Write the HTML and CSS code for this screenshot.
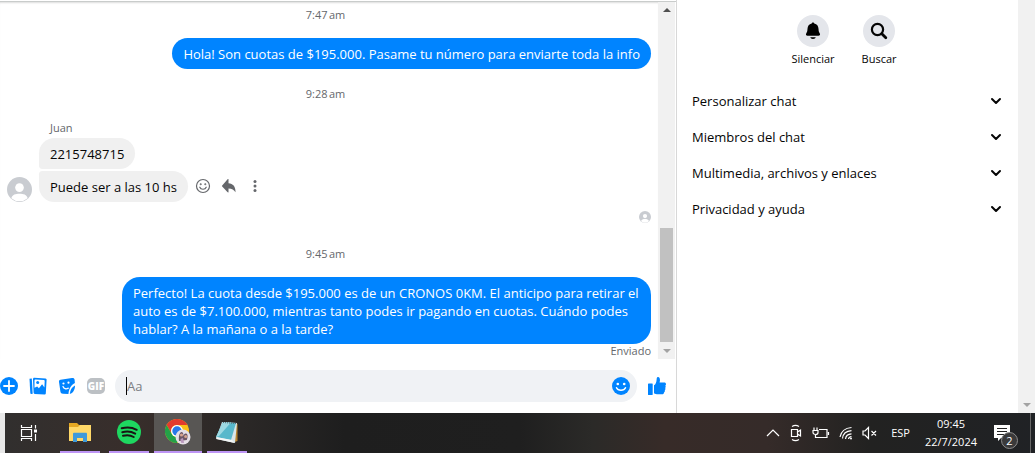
FILE: index.html
```html
<!DOCTYPE html>
<html lang="es">
<head>
  <meta charset="UTF-8">
  <meta name="viewport" content="width=device-width, initial-scale=1.0">
  <title>Messenger</title>
  <link rel="stylesheet" href="styles.css">
</head>
<body>
  <svg class="defs" aria-hidden="true">
    <symbol id="person" viewBox="0 0 26 26">
      <circle cx="13" cy="13" r="13" fill="#c9ccd1"/>
      <circle cx="13" cy="11" r="4.5" fill="#fff"/>
      <path d="M4.5 22c1-3.6 4.5-4.500 8.500-4.500s7.500.9 8.500 4.500a13 13 0 0 1-17 0z" fill="#fff"/>
    </symbol>
    <symbol id="chevron" viewBox="0 0 12 12">
      <path d="M2 4l4 4 4-4" fill="none" stroke="#050505" stroke-width="2" stroke-linecap="round" stroke-linejoin="round"/>
    </symbol>
  </svg>

  <main class="app">
    <section class="chat">
      <div class="history">
        <div class="messages">
          <time class="time">7:47&#8239;am</time>
          <div class="bubble sent">Hola! Son cuotas de $195.000. Pasame tu número para enviarte toda la info</div>
          <time class="time">9:28&#8239;am</time>
          <div class="sender">Juan</div>
          <div class="row">
            <svg class="avatar"><use href="#person"/></svg>
            <div class="group">
              <div class="bubble received">2215748715</div>
              <div class="bubble received last">Puede ser a las 10 hs</div>
            </div>
            <div class="actions">
              <button type="button" aria-label="Reaccionar">
                <svg width="16" height="16" viewBox="0 0 16 16" fill="none" stroke="#65676b" stroke-width="1.2"><circle cx="8" cy="8" r="6.5"/><path d="M4.8 9.2c1 2.700 5.400 2.700 6.400 0" stroke-linecap="round"/><circle cx="5.700" cy="6.200" r=".4"/><circle cx="10.300" cy="6.200" r=".4"/></svg>
              </button>
              <button type="button" aria-label="Responder">
                <svg width="16" height="16" viewBox="0 0 16 16" fill="#65676b"><path d="M7.500 1.500v3.700c4.500.2 7 3.300 7 8.300v.8c-1.500-2.300-3.500-3.600-7-3.700v3.300c0 .6-.5.700-.9.400L1.200 8.600c-.4-.4-.4-.7 0-1.100l5.400-6.200c.4-.4.900-.3.900.2z"/></svg>
              </button>
              <button type="button" aria-label="Más">
                <svg width="16" height="16" viewBox="0 0 16 16" fill="#65676b"><circle cx="8" cy="3.500" r="1.500"/><circle cx="8" cy="8" r="1.500"/><circle cx="8" cy="12.500" r="1.500"/></svg>
              </button>
            </div>
          </div>
          <svg class="seen"><use href="#person"/></svg>
          <time class="time">9:45&#8239;am</time>
          <div class="bubble sent">Perfecto! La cuota desde $195.000 es de un CRONOS 0KM. El anticipo para retirar el auto es de $7.100.000, mientras tanto podes ir pagando en cuotas. Cuándo podes hablar? A la mañana o a la tarde?</div>
          <div class="status">Enviado</div>
        </div>
        <div class="scrollbar" aria-hidden="true">
          <span class="arrow up"></span>
          <span class="thumb"></span>
          <span class="arrow down"></span>
        </div>
      </div>

      <form class="composer">
        <div class="tools">
          <button type="button" aria-label="Más opciones">
            <svg width="18" height="18" viewBox="0 0 18 18"><circle cx="9" cy="9" r="9" fill="#0084ff"/><path d="M9 4v10M4 9h10" stroke="#fff" stroke-width="1.8" stroke-linecap="round"/></svg>
          </button>
          <button type="button" aria-label="Adjuntar foto">
            <svg width="18" height="18" viewBox="0 0 18 18"><path d="M.5 1.800l2.300-.4.900 15.400-1.400.2c-.6 0-.9-.3-1-.8z" fill="#0084ff"/><path d="M5.300.8l11.200.7c.8.100 1.200.5 1.100 1.300l-.8 13.600c-.1.800-.5 1.200-1.300 1.100l-9.700-.6c-.7 0-1.100-.4-1.200-1.100L4 2.200C4 1.400 4.500.8 5.300.8z" fill="#0084ff"/><path d="M5.500 10.800V3.500c0-.6.300-.9.900-.9l8.400.5c.6 0 .9.400.9.900l-.3 6.500-2.300-3.300-3.200 4-1.700-1.700z" fill="#fff"/><circle cx="8.700" cy="5.600" r="1.500" fill="#0084ff"/></svg>
          </button>
          <button type="button" aria-label="Elegir un sticker">
            <svg width="18" height="18" viewBox="0 0 18 18"><path d="M2.500 2.800L14 1c1.500-.2 2.400.4 2.600 1.800l.3 3.200c-3.200 1.500-5.700 4.500-6.500 11L5 16.800c-1.500-.1-2.300-.9-2.600-2.300L1 5c-.2-1.200.3-2 1.500-2.200z" fill="#0084ff"/><path d="M17 8.500c0 4.300-2 7.600-5.200 8.500.4-4 2-7 5.200-8.500z" fill="#0084ff"/><path d="M5 9.500c1 2.300 3 2.900 5.300 1.700" fill="none" stroke="#fff" stroke-width="1.3" stroke-linecap="round"/><circle cx="5.500" cy="6.500" r="1.100" fill="#fff"/><circle cx="10.500" cy="5.700" r="1.100" fill="#fff"/></svg>
          </button>
          <button type="button" class="gif" aria-label="Elegir un GIF">GIF</button>
        </div>
        <div class="field">
          <input type="text" placeholder="Aa" aria-label="Mensaje">
          <button type="button" aria-label="Elegir un emoji">
            <svg width="18" height="18" viewBox="0 0 18 18"><circle cx="9" cy="9" r="9" fill="#0084ff"/><circle cx="5.800" cy="7" r="1.300" fill="#fff"/><circle cx="12.200" cy="7" r="1.300" fill="#fff"/><path d="M4.500 10.700c1.500 3.400 7.500 3.400 9 0" fill="none" stroke="#fff" stroke-width="1.5" stroke-linecap="round"/></svg>
          </button>
        </div>
        <button type="button" aria-label="Enviar me gusta">
          <svg width="18" height="18" viewBox="0 0 18 18" fill="#0084ff"><path d="M.7 6.500h3.500c.3 0 .5.200.5.500v10.500c0 .3-.2.500-.5.500H.7c-.4 0-.7-.2-.7-.6V7.100c0-.4.300-.6.700-.6z"/><path d="M6 8.300c1.700-1 2.500-3 2.700-6.600C8.700.5 9.300 0 10.200 0c1.600.3 2.300 2.500 1.400 5.600h4.700c1 0 1.700.7 1.700 1.600 0 .7-.3 1.100-.7 1.400.5.800.6 1.700-.1 2.400.4.800.3 1.700-.4 2.200.3 1-.1 1.800-.8 2.200 0 1.200-.7 1.800-1.900 1.800H10c-1.700 0-2.800-.3-4-1z"/></svg>
        </button>
      </form>
    </section>

    <aside class="details">
      <div class="panel">
        <div class="shortcuts">
          <button type="button" class="shortcut">
            <span class="circle"><svg width="16" height="18" viewBox="0 0 16 18"><path d="M8 .5c.7 0 1.200.5 1.300 1.100 2.700.6 4.100 2.600 4.200 5.200.1 2.600.6 3.500 1.300 4.800.7 1.300 0 2.200-1.300 2.200h-11c-1.300 0-2-.9-1.300-2.200.7-1.300 1.200-2.200 1.300-4.800.1-2.600 1.500-4.600 4.200-5.200C6.800 1 7.300.5 8 .5zM5.300 15.200h5.400c-.3 1-1.200 1.700-2.700 1.700s-2.400-.7-2.700-1.700z"/></svg></span>
            Silenciar
          </button>
          <button type="button" class="shortcut">
            <span class="circle"><svg width="18" height="18" viewBox="0 0 18 18" fill="none" stroke="#050505"><circle cx="7.500" cy="7.500" r="5.600" stroke-width="2.200"/><path d="M11.800 11.800l4 4" stroke-width="2.800" stroke-linecap="round"/></svg></span>
            Buscar
          </button>
        </div>
        <button type="button" class="section">Personalizar chat <svg width="12" height="12"><use href="#chevron"/></svg></button>
        <button type="button" class="section">Miembros del chat <svg width="12" height="12"><use href="#chevron"/></svg></button>
        <button type="button" class="section">Multimedia, archivos y enlaces <svg width="12" height="12"><use href="#chevron"/></svg></button>
        <button type="button" class="section">Privacidad y ayuda <svg width="12" height="12"><use href="#chevron"/></svg></button>
      </div>
      <div class="scrollbar page" aria-hidden="true">
        <span class="arrow down"></span>
      </div>
    </aside>
  </main>

  <footer class="taskbar">
    <button type="button" class="task" aria-label="Vista de tareas">
      <svg width="18" height="18" viewBox="0 0 18 18" fill="none" stroke="#fff" stroke-width="1.2"><path d="M1.500 1v2.500h10V1M1.500 17v-2.500h10V17M1.500 5.500h10v7h-10zM15.500 1v3.500M15.500 10v7"/><path d="M14 5.500h3v3h-3z" fill="#fff" stroke="none"/></svg>
    </button>
    <button type="button" class="task open" aria-label="Explorador de archivos">
      <svg width="24" height="24" viewBox="0 0 24 24"><path d="M1 3h8l2 2h12v16H1z" fill="#e5a823"/><path d="M1 7h9l2-2h11v16H1z" fill="#ffd868"/><path d="M5 22v-8c0-.8.500-1.200 1.200-1.200h11.600c.7 0 1.200.4 1.200 1.200v8h-4v-4H9v4z" fill="#3f9ad9"/></svg>
    </button>
    <button type="button" class="task open" aria-label="Spotify">
      <svg width="24" height="24" viewBox="0 0 24 24"><circle cx="12" cy="12" r="12" fill="#1ed760"/><path d="M4.700 8.300c5-1.400 10.500-1 15 1.500M5.300 12.200c4.500-1.300 9-.8 12.900 1.400M6 15.800c3.800-1 7.500-.7 10.700 1.200" fill="none" stroke="#191414" stroke-width="2" stroke-linecap="round"/></svg>
    </button>
    <button type="button" class="task open current" aria-label="Google Chrome">
      <svg width="26" height="26" viewBox="0 0 26 26"><circle cx="12" cy="12" r="12" fill="#fbc116"/><path d="M1.600 6A12 12 0 0 1 22.400 6H12a6 6 0 0 0-5.200 9z" fill="#e33b2e"/><path d="M1.600 6a12 12 0 0 0 10.400 18l5.200-9A6 6 0 0 1 6.800 15z" fill="#24a148"/><circle cx="12" cy="12" r="6" fill="#fff"/><circle cx="12" cy="12" r="4.700" fill="#2878e8"/><circle cx="18" cy="18" r="7.500" fill="#e6dfe6"/><path d="M14 22c-.5-5 .5-8.500 2.500-9 2 .2 1.800 2 1.900 4 .5-1.800 1.300-3 2.900-2.500 1.800 1 1.500 4 .5 6.500z" fill="#6c5765"/><circle cx="16.500" cy="16" r="1.600" fill="#d5a38f"/><circle cx="20.700" cy="17.500" r="1.500" fill="#d5a38f"/><path d="M15.500 20l2.500-1 1 5-3-.2z" fill="#b998bd"/></svg>
    </button>
    <button type="button" class="task open" aria-label="Bloc de notas">
      <svg width="24" height="24" viewBox="0 0 24 24"><path d="M20 3l2.500 1v17l-3 1z" fill="#b7832d"/><path d="M7 2l15 1-2 20-19-4z" fill="#d9e6e9"/><path d="M8 2l13 1-5 17L1 17z" fill="#58b8cb"/><path d="M8 2l8 .6L4 16l-3 1z" fill="#9ed9e2"/><path d="M1 17l16 3 2.500 3L2 19z" fill="#f3f5f5"/><path d="M8 2.500l14 1" stroke="#56646a" stroke-dasharray="1 1"/></svg>
    </button>

    <div class="tray">
      <svg width="14" height="14" viewBox="0 0 14 14"><path d="M1 10l6-6 6 6"/></svg>
      <svg width="14" height="18" viewBox="0 0 14 18"><path d="M2.500 5.500h6v7h-6zM8.500 8l3-2v6l-3-2M3 2.500c2-1.300 5-1.300 7 0M3 15.500c2 1.300 5 1.300 7 0"/></svg>
      <svg width="18" height="16" viewBox="0 0 18 16"><path d="M7 4.500h8v8H6M16.500 7v3M1 5.500h5v2c0 1-1 2-2.500 2S1 8.500 1 7.500zM2 2.500v3M5 2.500v3M3.500 9.500v3H6"/></svg>
      <svg width="14" height="14" viewBox="0 0 14 14"><path d="M1 11C2 6 6 2 12.500 1.500M3.500 12.500c.5-4.500 4-7.500 9-7.800M6.500 13c.3-3 2.700-5 6-5.200M9.500 13c.2-1.500 1.300-2.300 3-2.500"/><circle cx="12" cy="12.500" r="1" fill="#fff" stroke="none"/></svg>
      <svg width="16" height="14" viewBox="0 0 16 14"><path d="M1 5h2l3.500-3.500v11L3 9H1zM9.500 5l4.500 4.500M14 5L9.500 9.500"/></svg>
      <span class="language">ESP</span>
      <div class="clock"><time>09:45</time><time>22/7/2024</time></div>
      <button type="button" class="notices" aria-label="Notificaciones">
        <svg width="16" height="16" viewBox="0 0 16 16"><path d="M0 0h16v13H7l-3 3v-3H0z" fill="#fff" stroke="none"/><path d="M3 3.500h10M3 6.500h10M3 9.500h7" stroke="#222"/></svg>
        <span class="badge">2</span>
      </button>
    </div>
  </footer>
</body>
</html>
```
FILE: styles.css
```css
* {
  box-sizing: border-box;
}

body {
  margin: 0;
  height: 100vh;
  display: flex;
  flex-direction: column;
  overflow: hidden;
  background: #fff;
  color: #050505;
  font-family: "Open Sans", "Noto Sans", sans-serif;
  font-size: 13px;
  line-height: 18px;
}

button {
  padding: 0;
  border: none;
  background: none;
  color: inherit;
  font: inherit;
  cursor: pointer;
}

svg {
  display: block;
  flex: none;
}

.defs {
  position: absolute;
  width: 0;
  height: 0;
}

.app {
  flex: 1;
  min-height: 0;
  display: flex;
}

/* conversation */
.chat {
  flex: 1;
  min-width: 0;
  display: flex;
  flex-direction: column;
  border-right: 1px solid #d8d8d8;
}

.history {
  flex: 1;
  min-height: 0;
  display: flex;
  margin-top: 1px;
  padding-right: 1px;
  border-top: 1px solid #c9cccb;
}

.messages {
  flex: 1;
  min-width: 0;
  display: flex;
  flex-direction: column;
  padding-right: 7px;
  box-shadow: inset 0 2px 2px -1px #ddd;
}

.time {
  align-self: center;
  margin: 4px 0 14px;
  color: #65676b;
  font-size: 11px;
  font-weight: 500;
}

.bubble {
  max-width: 529px;
  padding: 7px 11px 6px;
  border-radius: 18px;
}

.sent {
  align-self: flex-end;
  background: #0084ff;
  color: #fff;
}

.sent + .time {
  margin-top: 16px;
}

.sender {
  margin: 2px 0 1px 50px;
  color: #65676b;
  font-size: 11px;
}

.row {
  display: flex;
  align-items: flex-end;
  padding-left: 7px;
}

.avatar {
  width: 25px;
  height: 25px;
  margin-right: 7px;
}

.group {
  display: flex;
  flex-direction: column;
  align-items: flex-start;
  gap: 2px;
}

.received {
  background: #f0f0f0;
  border-bottom-left-radius: 4px;
}

.received.last {
  border-radius: 4px 18px 18px 18px;
}

.actions {
  display: flex;
  gap: 10px;
  padding: 0 0 8px 7px;
}

.seen {
  align-self: flex-end;
  width: 12px;
  height: 12px;
  margin: 9px 0 18px;
}

.status {
  align-self: flex-end;
  margin-top: -2px;
  color: #65676b;
  font-size: 11px;
}

.scrollbar {
  flex: none;
  width: 17px;
  display: flex;
  flex-direction: column;
  align-items: center;
  justify-content: space-between;
  padding: 6px 2px;
  background: #f1f1f1;
}

.thumb {
  width: 13px;
  height: 114px;
  margin: auto 0 7px;
  background: #c1c1c1;
}

.arrow {
  border: 4px solid transparent;
}

.arrow.up {
  border-top: none;
  border-bottom-color: #505050;
}

.arrow.down {
  border-bottom: none;
  border-top-color: #a3a3a3;
}

/* composer */
.composer {
  display: flex;
  align-items: center;
  padding: 11px 10px 11px 0;
}

.tools {
  display: flex;
  gap: 11px;
  margin-right: 10px;
}

.gif {
  width: 18px;
  height: 16px;
  margin-top: 1px;
  border-radius: 5px;
  background: #bcc0c4;
  color: #fff;
  font-size: 10px;
  font-weight: 800;
  line-height: 16px;
}

.field {
  flex: 1;
  height: 32px;
  display: flex;
  align-items: center;
  margin-right: 11px;
  padding: 0 7px 0 11px;
  border-radius: 16px;
  background: #f0f2f5;
}

.field input {
  flex: 1;
  min-width: 0;
  height: 18px;
  padding: 0;
  border: none;
  border-left: 1px solid #050505;
  outline: none;
  background: none;
  font: inherit;
}

.field input::placeholder {
  color: #7b7d82;
}

/* details panel */
.details {
  width: 358px;
  display: flex;
  justify-content: space-between;
}

.panel {
  flex: 1;
  padding: 15px 15px 0;
}

.shortcuts {
  display: flex;
  justify-content: center;
  gap: 27px;
  margin-bottom: 15px;
  padding-right: 7px;
}

.shortcut {
  display: flex;
  flex-direction: column;
  align-items: center;
  gap: 3px;
  font-size: 11px;
}

.circle {
  width: 32px;
  height: 32px;
  display: flex;
  align-items: center;
  justify-content: center;
  border-radius: 50%;
  background: #e4e6eb;
}

.section {
  width: 100%;
  height: 36px;
  display: flex;
  align-items: center;
  justify-content: space-between;
  padding-right: 1px;
  font-weight: 500;
}

.page {
  justify-content: flex-end;
}

/* taskbar */
.taskbar {
  height: 40px;
  display: flex;
  border-left: 5px solid #e8e8e8;
  background: linear-gradient(90deg, #312f2e 0%, #382e2b 12%, #2b2827 23%, #1e1e1e 33%, #1f1f1f 50%, #2b2a28 57%, #372b28 64%, #352b29 74%, #222221 84%, #202225 100%);
  color: #fff;
}

.task {
  width: 40px;
  display: flex;
  align-items: center;
  justify-content: center;
  margin-right: 9px;
}

.task:first-child {
  width: 48px;
  margin-right: 7px;
}

.open {
  border-bottom: 2px solid #be95f5;
}

.current {
  width: 48px;
  margin: 0 5px 0 -4px;
  background: #585654;
}

.tray {
  display: flex;
  align-items: center;
  gap: 9px;
  margin: 0 4px 0 auto;
  padding-right: 20px;
  border-right: 1px solid #666;
  font-size: 11px;
}

.tray svg {
  fill: none;
  stroke: #fff;
  stroke-width: 1.2;
}

.language {
  margin-left: 4px;
}

.clock {
  display: flex;
  flex-direction: column;
  align-items: center;
  margin: 0 8px 0 6px;
}

.notices {
  position: relative;
}

.badge {
  position: absolute;
  left: 7px;
  top: 7px;
  width: 17px;
  height: 17px;
  border: 1px solid #8b8b8b;
  border-radius: 50%;
  background: #3a3a3b;
  line-height: 15px;
}
```
